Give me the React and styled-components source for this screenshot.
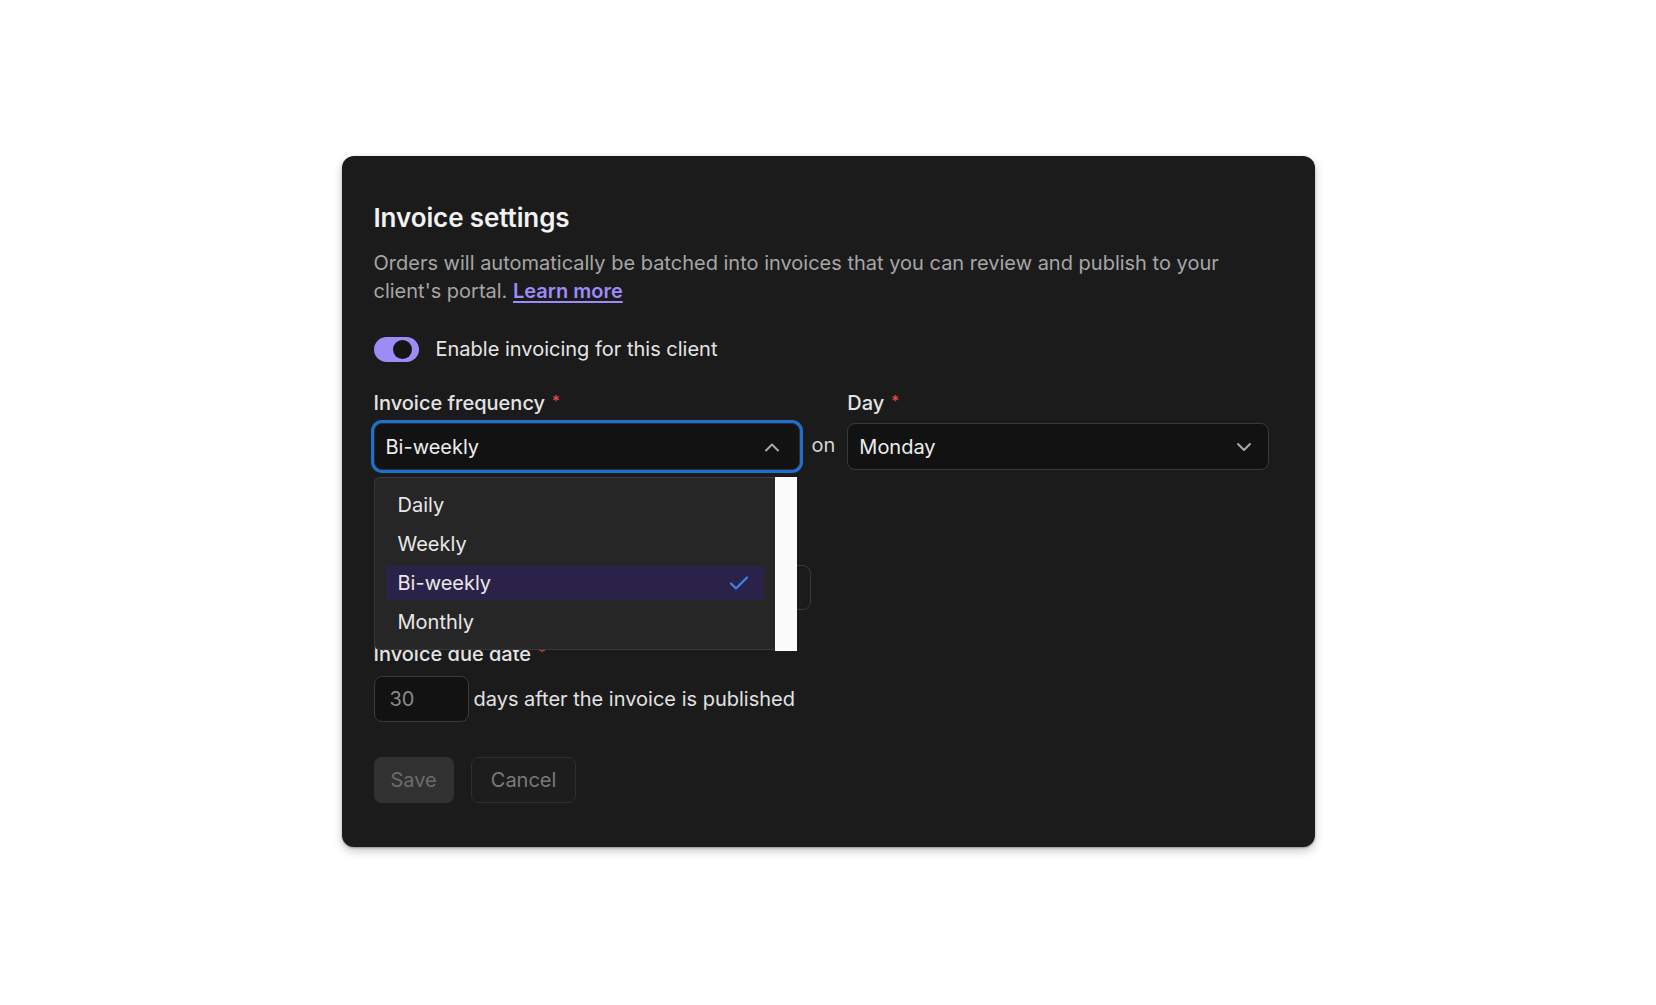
import React from "react";
import styled, { createGlobalStyle } from "styled-components";

const GlobalStyle = createGlobalStyle`
  html, body { margin: 0; padding: 0; background: #ffffff; }
  body { font-family: Inter, "Noto Sans", sans-serif; -webkit-font-smoothing: antialiased; }
`;

const Page = styled.div`
  min-height: 100vh;
  padding-top: 156px;
  box-sizing: border-box;
`;

const Card = styled.section`
  width: 973px;
  margin: 0 auto;
  box-sizing: border-box;
  background: #1b1b1b;
  border-radius: 12px;
  padding: 46px 33px 44px 32px;
  box-shadow: 0 4px 10px rgba(0, 0, 0, 0.22), 0 1px 2px rgba(0, 0, 0, 0.3);
  color: #ececec;
`;

const Title = styled.h2`
  margin: 0;
  font-size: 26px;
  line-height: 32px;
  font-weight: 600;
  color: #f2f2f2;
  letter-spacing: -0.1px;
`;

const Description = styled.p`
  margin: 15px 0 0;
  max-width: 880px;
  font-size: 20px;
  line-height: 28px;
  color: #a6a6a6;
`;

const Link = styled.a`
  color: #9d8cf7;
  font-weight: 600;
  text-decoration: underline;
  text-underline-offset: 3px;
`;

const ToggleRow = styled.label`
  margin-top: 30px;
  display: flex;
  align-items: center;
  gap: 17px;
  height: 28px;
  font-size: 20px;
  color: #e6e6e6;
`;

const Toggle = styled.span`
  width: 45px;
  height: 25px;
  border-radius: 13px;
  background: #9d8cf5;
  display: flex;
  align-items: center;
  justify-content: flex-end;
  padding-right: 7px;
  box-sizing: border-box;
  &::after {
    content: "";
    width: 19px;
    height: 19px;
    border-radius: 50%;
    background: #151515;
  }
`;

const FieldGrid = styled.div`
  margin-top: 26px;
  display: grid;
  grid-template-columns: 426px auto 422px;
  grid-template-rows: 28px 47px;
  justify-content: start;
  column-gap: 12px;
  row-gap: 6px;
  align-items: center;
`;

const Label = styled.div`
  font-size: 20px;
  line-height: 28px;
  height: 28px;
  font-weight: 500;
  color: #e4e4e4;
  grid-column: ${(p) => p.$col || "auto"};
  span {
    position: relative;
    top: -4px;
    color: #e5484d;
    font-size: 15px;
    margin-left: 7px;
  }
`;

const SelectWrap = styled.div`
  position: relative;
  grid-column: ${(p) => p.$col || "auto"};
  grid-row: 2;
`;

const SelectBox = styled.div`
  height: 47px;
  box-sizing: border-box;
  border: 1px solid ${(p) => (p.$open ? "#2d2d2d" : "#3a3a3a")};
  border-radius: 8px;
  background: #121212;
  display: flex;
  align-items: center;
  justify-content: space-between;
  padding: 0 ${(p) => (p.$open ? 19 : 16)}px 0 11px;
  font-size: 20px;
  color: #ededed;
  box-shadow: ${(p) => (p.$open ? "0 0 0 3px #1f6fcf" : "none")};
`;

const On = styled.div`
  grid-column: 2;
  grid-row: 2;
  font-size: 20px;
  color: #d6d6d6;
  margin-top: -3px;
`;

const Dropdown = styled.div`
  position: absolute;
  top: 54px;
  left: 0;
  width: 423px;
  height: 174px;
  display: flex;
  z-index: 5;
`;

const List = styled.ul`
  list-style: none;
  margin: 0;
  flex: 1;
  box-sizing: border-box;
  padding: 10px 11px 9px;
  background: #262626;
  border: 1px solid #3a3a3a;
  border-right: none;
  border-radius: 6px 0 0 6px;
  display: flex;
  flex-direction: column;
  gap: 5px;
  height: 173px;
  overflow: hidden;
`;

const Item = styled.li`
  height: 34px;
  flex: none;
  border-radius: 3px;
  display: flex;
  align-items: center;
  justify-content: space-between;
  padding: 0 15px 0 12px;
  font-size: 20px;
  line-height: 28px;
  color: #e8e8e8;
  background: ${(p) => (p.$selected ? "#2a2249" : "transparent")};
`;

const Scrollbar = styled.div`
  width: 22px;
  height: 174px;
  background: #fbfbfb;
  flex: none;
`;

const Field = styled.div`
  margin-top: ${(p) => p.$mt || 0}px;
`;

const TextInput = styled.div`
  width: ${(p) => p.$w}px;
  height: ${(p) => p.$h}px;
  box-sizing: border-box;
  border: 1px solid #3a3a3a;
  border-radius: 8px;
  background: ${(p) => p.$bg || "#121212"};
  display: flex;
  align-items: center;
  padding: 0 15px;
  font-size: 20px;
  color: #8a8a8a;
`;

const InlineRow = styled.div`
  margin-top: ${(p) => p.$mt || 0}px;
  display: flex;
  align-items: center;
  gap: 5px;
  font-size: 20px;
  color: #e2e2e2;
`;

const Buttons = styled.div`
  margin-top: 35px;
  display: flex;
  gap: 17px;
`;

const Button = styled.button`
  height: 46px;
  box-sizing: border-box;
  padding: 0 ${(p) => (p.$primary ? 16 : 19)}px;
  border-radius: 7px;
  font-family: inherit;
  font-size: 20px;
  border: 1px solid ${(p) => (p.$primary ? "#313131" : "#2e2e2e")};
  background: ${(p) => (p.$primary ? "#313131" : "#1d1d1d")};
  color: ${(p) => (p.$primary ? "#6b6b6b" : "#7a7a7a")};
`;

const Chevron = ({ up }) => (
  <svg width="16" height="10" viewBox="0 0 16 10" fill="none">
    <path
      d={up ? "M2 8.5 L8 2.5 L14 8.5" : "M2 2 L8 8 L14 2"}
      stroke="#a9a9a9"
      strokeWidth="2"
      strokeLinecap="round"
      strokeLinejoin="round"
    />
  </svg>
);

const Check = () => (
  <svg width="20" height="16" viewBox="0 0 20 16" fill="none">
    <path
      d="M2 8.5 L7 13.5 L18 2.5"
      stroke="#3b7fe8"
      strokeWidth="2.4"
      strokeLinecap="round"
      strokeLinejoin="round"
    />
  </svg>
);

const options = ["Daily", "Weekly", "Bi-weekly", "Monthly"];

export default function App() {
  return (
    <>
      <GlobalStyle />
      <Page>
        <Card>
          <Title>Invoice settings</Title>
          <Description>
            Orders will automatically be batched into invoices that you can review and publish to your
            client's portal. <Link href="#">Learn more</Link>
          </Description>

          <ToggleRow>
            <Toggle />
            Enable invoicing for this client
          </ToggleRow>

          <FieldGrid>
            <Label $col="1">
              Invoice frequency<span>*</span>
            </Label>
            <Label $col="3">
              Day<span>*</span>
            </Label>
            <SelectWrap $col="1">
              <SelectBox $open>
                Bi-weekly
                <Chevron up />
              </SelectBox>
              <Dropdown>
                <List>
                  {options.map((o) => (
                    <Item key={o} $selected={o === "Bi-weekly"}>
                      {o}
                      {o === "Bi-weekly" && <Check />}
                    </Item>
                  ))}
                </List>
                <Scrollbar />
              </Dropdown>
            </SelectWrap>
            <On>on</On>
            <SelectWrap $col="3">
              <SelectBox>
                Monday
                <Chevron />
              </SelectBox>
            </SelectWrap>
          </FieldGrid>

          <Field $mt={62}>
            <Label>
              Starting on<span>*</span>
            </Label>
            <Field $mt={5}>
              <TextInput $w={437} $h={45} $bg="#1b1b1b" />
            </Field>
          </Field>

          <Field $mt={30}>
            <Label>
              Invoice due date<span>*</span>
            </Label>
            <InlineRow $mt={8}>
              <TextInput $w={95} $h={46}>30</TextInput>
              days after the invoice is published
            </InlineRow>
          </Field>

          <Buttons>
            <Button $primary>Save</Button>
            <Button>Cancel</Button>
          </Buttons>
        </Card>
      </Page>
    </>
  );
}
